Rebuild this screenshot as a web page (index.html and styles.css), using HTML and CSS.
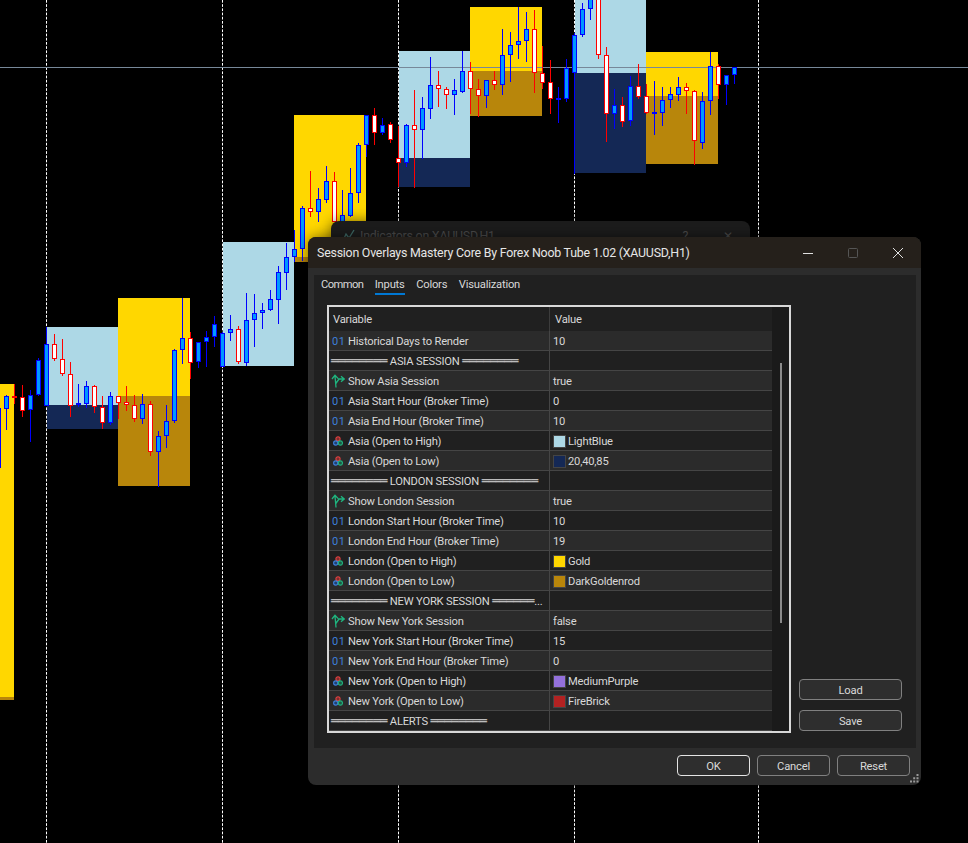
FILE: index.html
```html
<!DOCTYPE html>
<html lang="en">
<head>
    <meta charset="UTF-8">
    <meta name="viewport" content="width=device-width, initial-scale=1.0">
    <title>Session Overlays Mastery Core</title>
    <link rel="stylesheet" href="styles.css">
</head>
<body>
    <svg class="chart" id="chart" width="968" height="843" viewBox="0 0 968 843"></svg>

    <svg class="icon-defs" width="0" height="0">
        <symbol id="icon-bool" viewBox="0 0 14 14">
            <path d="M5 13.5 L4 2 M1 5 L4 1.2 L7.2 4.6 M4.8 9.5 L8 5 L13 5 M10 2.2 L13.2 5 L10 7.8" fill="none" stroke="#1fb57f" stroke-width="1.3"/>
        </symbol>
        <symbol id="icon-color" viewBox="0 0 10 10">
            <circle cx="5" cy="2.8" r="2.1" fill="#7a2f2f" stroke="#e04040" stroke-width="1.1"/>
            <circle cx="2.7" cy="7" r="2.1" fill="#23406f" stroke="#3d7fd9" stroke-width="1.1"/>
            <circle cx="7.4" cy="7" r="2.1" fill="#1d5a45" stroke="#22b07d" stroke-width="1.1"/>
        </symbol>
    </svg>

    <div class="dialog dialog-back">
        <div class="back-title">
            <svg class="back-icon" width="13" height="13" viewBox="0 0 13 13"><path d="M1 12 L4 5 L7 9 L12 1" fill="none" stroke="#3f6a66" stroke-width="1.3"/></svg>
            <span>Indicators on XAUUSD,H1</span>
            <span class="back-help">?</span>
            <span class="back-close">&#10005;</span>
        </div>
    </div>

    <div class="dialog dialog-main">
        <div class="titlebar">
            <span class="title">Session Overlays Mastery Core By Forex Noob Tube 1.02 (XAUUSD,H1)</span>
            <div class="window-btns">
                <svg width="10" height="10" viewBox="0 0 10 10"><path d="M0 5.5 H10" stroke="#e0e0e0" stroke-width="1"/></svg>
                <svg width="10" height="10" viewBox="0 0 10 10"><rect x="0.5" y="0.5" width="9" height="9" rx="1" fill="none" stroke="#555" stroke-width="1"/></svg>
                <svg width="10" height="10" viewBox="0 0 10 10"><path d="M0 0 L10 10 M10 0 L0 10" stroke="#e0e0e0" stroke-width="1"/></svg>
            </div>
        </div>

        <div class="dialog-body">
            <div class="panel">
                <div class="tabs">
                    <span class="tab">Common</span>
                    <span class="tab active">Inputs</span>
                    <span class="tab">Colors</span>
                    <span class="tab">Visualization</span>
                </div>
                <div class="content">
                    <div class="grid-box">
                        <table class="inputs">
                            <thead>
                                <tr><th>Variable</th><th>Value</th></tr>
                            </thead>
                            <tbody>
                                <tr><td><span class="var"><span class="num">01</span>Historical Days to Render</span></td><td>10</td></tr>
                                <tr><td class="sep"><span class="line">════════</span> ASIA SESSION <span class="line">════════</span></td><td></td></tr>
                                <tr><td><span class="var"><svg class="ico"><use href="#icon-bool"/></svg>Show Asia Session</span></td><td>true</td></tr>
                                <tr><td><span class="var"><span class="num">01</span>Asia Start Hour (Broker Time)</span></td><td>0</td></tr>
                                <tr><td><span class="var"><span class="num">01</span>Asia End Hour (Broker Time)</span></td><td>10</td></tr>
                                <tr><td><span class="var"><svg class="ico-color"><use href="#icon-color"/></svg>Asia (Open to High)</span></td><td><span class="swatch-cell"><i class="swatch light-blue"></i>LightBlue</span></td></tr>
                                <tr><td><span class="var"><svg class="ico-color"><use href="#icon-color"/></svg>Asia (Open to Low)</span></td><td><span class="swatch-cell"><i class="swatch navy"></i>20,40,85</span></td></tr>
                                <tr><td class="sep"><span class="line">════════</span> LONDON SESSION <span class="line">════════</span></td><td></td></tr>
                                <tr><td><span class="var"><svg class="ico"><use href="#icon-bool"/></svg>Show London Session</span></td><td>true</td></tr>
                                <tr><td><span class="var"><span class="num">01</span>London Start Hour (Broker Time)</span></td><td>10</td></tr>
                                <tr><td><span class="var"><span class="num">01</span>London End Hour (Broker Time)</span></td><td>19</td></tr>
                                <tr><td><span class="var"><svg class="ico-color"><use href="#icon-color"/></svg>London (Open to High)</span></td><td><span class="swatch-cell"><i class="swatch gold"></i>Gold</span></td></tr>
                                <tr><td><span class="var"><svg class="ico-color"><use href="#icon-color"/></svg>London (Open to Low)</span></td><td><span class="swatch-cell"><i class="swatch dark-gold"></i>DarkGoldenrod</span></td></tr>
                                <tr><td class="sep"><span class="line">════════</span> NEW YORK SESSION <span class="line">══════</span>...</td><td></td></tr>
                                <tr><td><span class="var"><svg class="ico"><use href="#icon-bool"/></svg>Show New York Session</span></td><td>false</td></tr>
                                <tr><td><span class="var"><span class="num">01</span>New York Start Hour (Broker Time)</span></td><td>15</td></tr>
                                <tr><td><span class="var"><span class="num">01</span>New York End Hour (Broker Time)</span></td><td>0</td></tr>
                                <tr><td><span class="var"><svg class="ico-color"><use href="#icon-color"/></svg>New York (Open to High)</span></td><td><span class="swatch-cell"><i class="swatch purple"></i>MediumPurple</span></td></tr>
                                <tr><td><span class="var"><svg class="ico-color"><use href="#icon-color"/></svg>New York (Open to Low)</span></td><td><span class="swatch-cell"><i class="swatch brick"></i>FireBrick</span></td></tr>
                                <tr><td class="sep"><span class="line">════════</span> ALERTS <span class="line">════════</span></td><td></td></tr>
                            </tbody>
                        </table>
                        <div class="scrollbar"><div class="thumb"></div></div>
                    </div>
                    <div class="side">
                        <button class="btn">Load</button>
                        <button class="btn">Save</button>
                    </div>
                </div>
            </div>
            <div class="footer">
                <button class="btn btn-ok">OK</button>
                <button class="btn btn-foot">Cancel</button>
                <button class="btn btn-foot">Reset</button>
            </div>
        </div>
        <svg class="grip" width="9" height="9" viewBox="0 0 9 9">
            <path d="M6.5 0 h2 v2 h-2z M3.2 3.2 h2 v2 h-2z M6.5 3.2 h2 v2 h-2z M0 6.5 h2 v2 h-2z M3.2 6.5 h2 v2 h-2z M6.5 6.5 h2 v2 h-2z" fill="#9a9a9a"/>
        </svg>
    </div>

    <script src="chart.js"></script>
</body>
</html>
```

FILE: styles.css
```css
* {
    box-sizing: border-box;
}
body {
    margin: 0;
    width: 968px;
    height: 843px;
    overflow: hidden;
    background-color: #000;
    font-family: Roboto, sans-serif;
    font-size: 11.2px;
    letter-spacing: -0.2px;
    color: #d8d8d8;
}
.chart {
    display: block;
}
.icon-defs {
    position: absolute;
}

/* chart parts, drawn by chart.js */
.vline {
    stroke: #fff;
    stroke-width: 1;
    stroke-dasharray: 2.7 1.5;
}
.hline {
    stroke: #778899;
    stroke-width: 1;
}
.light-blue-box { fill: #add8e6; }
.navy-box { fill: #142855; }
.gold-box { fill: #ffd700; }
.dark-gold-box { fill: #b8860b; }
.wick-up { stroke: #0000ff; stroke-width: 1; }
.wick-down { stroke: #ff0000; stroke-width: 1; }
.body-up { fill: #0099ff; stroke: #0000ff; stroke-width: 1; }
.body-down { fill: #fff; stroke: #ff0000; stroke-width: 1; }

/* windows */
.dialog {
    position: absolute;
    border-radius: 8px;
    box-shadow: 0 0 14px rgba(0, 0, 0, 0.55);
}
.dialog-back {
    left: 331px;
    top: 221px;
    width: 419px;
    height: 100px;
    background-color: #1c1c1c;
}
.back-title {
    display: flex;
    align-items: center;
    height: 28px;
    padding: 0 17px 0 11px;
    font-size: 12.4px;
    letter-spacing: -0.23px;
    color: #4a4a4a;
}
.back-icon {
    margin-right: 5px;
}
.back-help {
    margin-left: auto;
    margin-right: 35px;
}
.dialog-main {
    left: 308px;
    top: 237px;
    width: 613px;
    height: 548px;
    display: flex;
    flex-direction: column;
    overflow: hidden;
    background-color: #2c2c2c;
}
.titlebar {
    display: flex;
    align-items: center;
    justify-content: space-between;
    flex: none;
    height: 31px;
    padding: 0 18px 0 9px;
    background-color: #25201b;
}
.title {
    font-size: 12.4px;
    letter-spacing: -0.23px;
    color: #e6e6e6;
}
.window-btns {
    display: flex;
    gap: 35px;
}
.dialog-body {
    display: flex;
    flex-direction: column;
    flex: 1;
    padding: 7px 5px 0 6px;
}
.panel {
    flex: none;
    height: 473px;
    background-color: #202020;
}
.tabs {
    display: flex;
    gap: 11.5px;
    height: 20px;
    padding: 2px 0 0 7px;
    margin-bottom: 10px;
}
.tab {
    height: 18px;
    line-height: 16px;
}
.tab:first-child {
    letter-spacing: -0.6px;
}
.tab.active {
    border-bottom: 2px solid #0078d4;
}
.content {
    display: flex;
    margin-left: 13px;
}
.grid-box {
    display: flex;
    flex: none;
    width: 464px;
    height: 428px;
    border: 2px solid #d8d8d8;
}

/* inputs table */
.inputs {
    flex: none;
    width: 443px;
    height: 424px;
    table-layout: fixed;
    border-collapse: separate;
    border-spacing: 0;
}
.inputs th {
    height: 24px;
    padding: 1px 0 0 4px;
    font-weight: normal;
    text-align: left;
    background-color: #202020;
}
.inputs th:first-child {
    width: 221px;
    border-right: 1px solid #3c3c3c;
}
.inputs th:last-child {
    padding-left: 5px;
}
.inputs td {
    height: 20px;
    padding: 1px 0 0 3px;
    white-space: nowrap;
    overflow: hidden;
    border-bottom: 1px solid #454545;
}
.inputs td:first-child {
    border-right: 1px solid #454545;
}
.inputs tbody tr:nth-child(odd) td {
    background-color: #2b2b2b;
}
.inputs tbody tr:nth-child(even) td {
    background-color: #202020;
}
.inputs td.sep {
    padding: 0 0 0 2px;
}
.line {
    font-family: "DejaVu Sans", sans-serif;
    font-size: 12px;
    letter-spacing: -0.2px;
}
.var {
    display: flex;
    align-items: center;
}
.num {
    width: 16px;
    font-size: 11px;
    letter-spacing: 0.5px;
    color: #3d7fd9;
}
.ico {
    width: 14px;
    height: 14px;
    margin: 0 3px 0 -1px;
}
.ico-color {
    width: 10px;
    height: 10px;
    margin: 0 5px 0 1px;
}
.swatch-cell {
    display: flex;
    align-items: center;
}
.swatch {
    width: 13px;
    height: 13px;
    margin-right: 2px;
    border: 1px solid #444;
}
.light-blue { background-color: #add8e6; }
.navy { background-color: #142855; }
.gold { background-color: #ffd700; }
.dark-gold { background-color: #b8860b; }
.purple { background-color: #9370db; }
.brick { background-color: #b22222; }
.scrollbar {
    flex: 1;
    padding: 56px 0 0 8px;
    background-color: #1a1a1a;
}
.thumb {
    width: 2px;
    height: 260px;
    background-color: #8a8a8a;
}

/* buttons */
.btn {
    height: 21px;
    padding: 1px 0 0;
    font-family: inherit;
    font-size: 11.2px;
    letter-spacing: inherit;
    color: #d8d8d8;
    background-color: #2e2e2e;
    border: 1px solid #808080;
    border-radius: 4px;
}
.side {
    display: flex;
    flex-direction: column;
    justify-content: flex-end;
    gap: 10px;
    width: 103px;
    height: 426px;
    margin-left: 8px;
}
.footer {
    display: flex;
    justify-content: flex-end;
    gap: 7px;
    padding: 7px 6px 0 0;
}
.btn-ok,
.btn-foot {
    width: 73px;
}
.btn-ok {
    border-color: #e4e4e4;
}
.grip {
    position: absolute;
    right: 2px;
    bottom: 2px;
}
```

FILE: chart.js
```js
const svg = document.getElementById('chart');

// session boxes: left, right, then [colour class, top, bottom]
const sessions = [
    [0, 14, ['gold-box', 384, 697], ['dark-gold-box', 697, 700]],
    [47, 118, ['light-blue-box', 327, 405], ['navy-box', 405, 429]],
    [118, 190, ['gold-box', 298, 396], ['dark-gold-box', 396, 486]],
    [223, 294, ['light-blue-box', 242, 366]],
    [294, 366, ['gold-box', 115, 257], ['dark-gold-box', 257, 262]],
    [399, 470, ['light-blue-box', 51, 158], ['navy-box', 158, 187]],
    [470, 542, ['gold-box', 7, 71], ['dark-gold-box', 71, 116]],
    [575, 646, ['light-blue-box', 0, 73], ['navy-box', 73, 173]],
    [646, 718, ['gold-box', 52, 96], ['dark-gold-box', 96, 164]]
];

// candles, 8px apart from x = -2: type, high, low, body top, body bottom
const candles = [
    'u 408 468 408 468', 'u 395 430 396 409', 'd 384 404 396 398', 'd 385 417 397 411',
    'u 390 442 395 410', 'u 358 396 360 395', 'u 327 406 344 406', 'd 334 361 344 359',
    'd 339 376 359 374', 'd 362 417 374 406', 'u 384 407 403 405', 'u 381 408 386 404',
    'd 385 413 386 407', 'd 396 429 407 423', 'u 392 425 396 423', 'd 396 419 396 403',
    'd 386 411 402 405', 'd 395 422 405 419', 'u 394 424 404 419', 'd 401 456 404 452',
    'u 431 487 436 452', 'u 405 448 421 436', 'u 349 423 350 421', 'u 298 364 338 350',
    'd 332 379 338 363', 'u 342 368 342 362', 'u 331 367 337 342', 'u 316 347 324 337',
    'u 332 367 333 367', 'u 315 341 329 333', 'd 326 364 329 362', 'u 293 366 320 363',
    'u 294 347 313 320', 'u 303 329 310 313', 'u 290 311 299 310', 'u 266 324 272 300',
    'u 243 290 257 273', 'u 230 262 249 257', 'u 206 261 208 249', 'd 171 217 208 212',
    'u 188 222 199 212', 'u 166 203 181 200', 'd 172 222 181 222', 'u 190 222 215 222',
    'u 168 217 193 216', 'u 143 203 145 193', 'u 115 157 115 145', 'd 108 145 115 133',
    'u 118 135 125 133', 'd 122 143 124 140', 'd 126 187 158 163', 'u 124 167 125 163',
    'd 90 188 125 130', 'u 97 159 108 130', 'u 57 119 85 109', 'd 71 107 85 89',
    'd 87 109 89 95', 'u 79 115 90 95', 'u 51 93 71 92', 'd 62 114 71 89',
    'd 79 117 89 96', 'u 80 108 80 96', 'd 71 90 80 85', 'u 29 95 55 85',
    'u 32 82 45 55', 'u 7 59 41 45', 'u 12 62 29 41', 'd 10 93 29 73',
    'd 46 89 73 83', 'd 60 114 82 99', 'u 87 123 98 100', 'u 59 102 68 99',
    'u 33 174 35 73', 'u 3 37 9 35', 'u 0 20 -2 9', 'd 0 59 -2 55',
    'd 47 142 55 114', 'u 89 129 105 114', 'd 97 127 105 122', 'u 76 126 86 121',
    'd 64 99 86 97', 'd 84 114 96 113', 'u 81 135 112 114', 'u 87 126 100 113',
    'u 87 108 94 100', 'u 77 101 87 95', 'd 83 114 87 91', 'd 90 165 91 141',
    'u 92 149 101 143', 'u 52 115 66 101', 'd 64 99 66 85', 'u 75 105 75 85',
    'u 67 84 67 75'
];

function add(tag, cls, attrs) {
    const el = document.createElementNS('http://www.w3.org/2000/svg', tag);
    el.setAttribute('class', cls);
    for (const key in attrs) {
        el.setAttribute(key, attrs[key]);
    }
    svg.appendChild(el);
}

[46, 222, 398, 574, 758].forEach(function (x) {
    add('line', 'vline', { x1: x + 0.5, x2: x + 0.5, y1: 0, y2: 843 });
});

sessions.forEach(function (s) {
    s.slice(2).forEach(function (part) {
        add('rect', part[0], { x: s[0], y: part[1], width: s[1] - s[0], height: part[2] - part[1] });
    });
});

add('line', 'hline', { x1: 0, x2: 968, y1: 67.5, y2: 67.5 });

candles.forEach(function (c, i) {
    const p = c.split(' ');
    const type = p[0] === 'u' ? 'up' : 'down';
    const x = -2 + i * 8;
    add('line', 'wick-' + type, { x1: x + 0.5, x2: x + 0.5, y1: +p[1], y2: +p[2] });
    add('rect', 'body-' + type, { x: x - 1.5, y: +p[3] + 0.5, width: 4, height: p[4] - p[3] - 1 });
});
```
